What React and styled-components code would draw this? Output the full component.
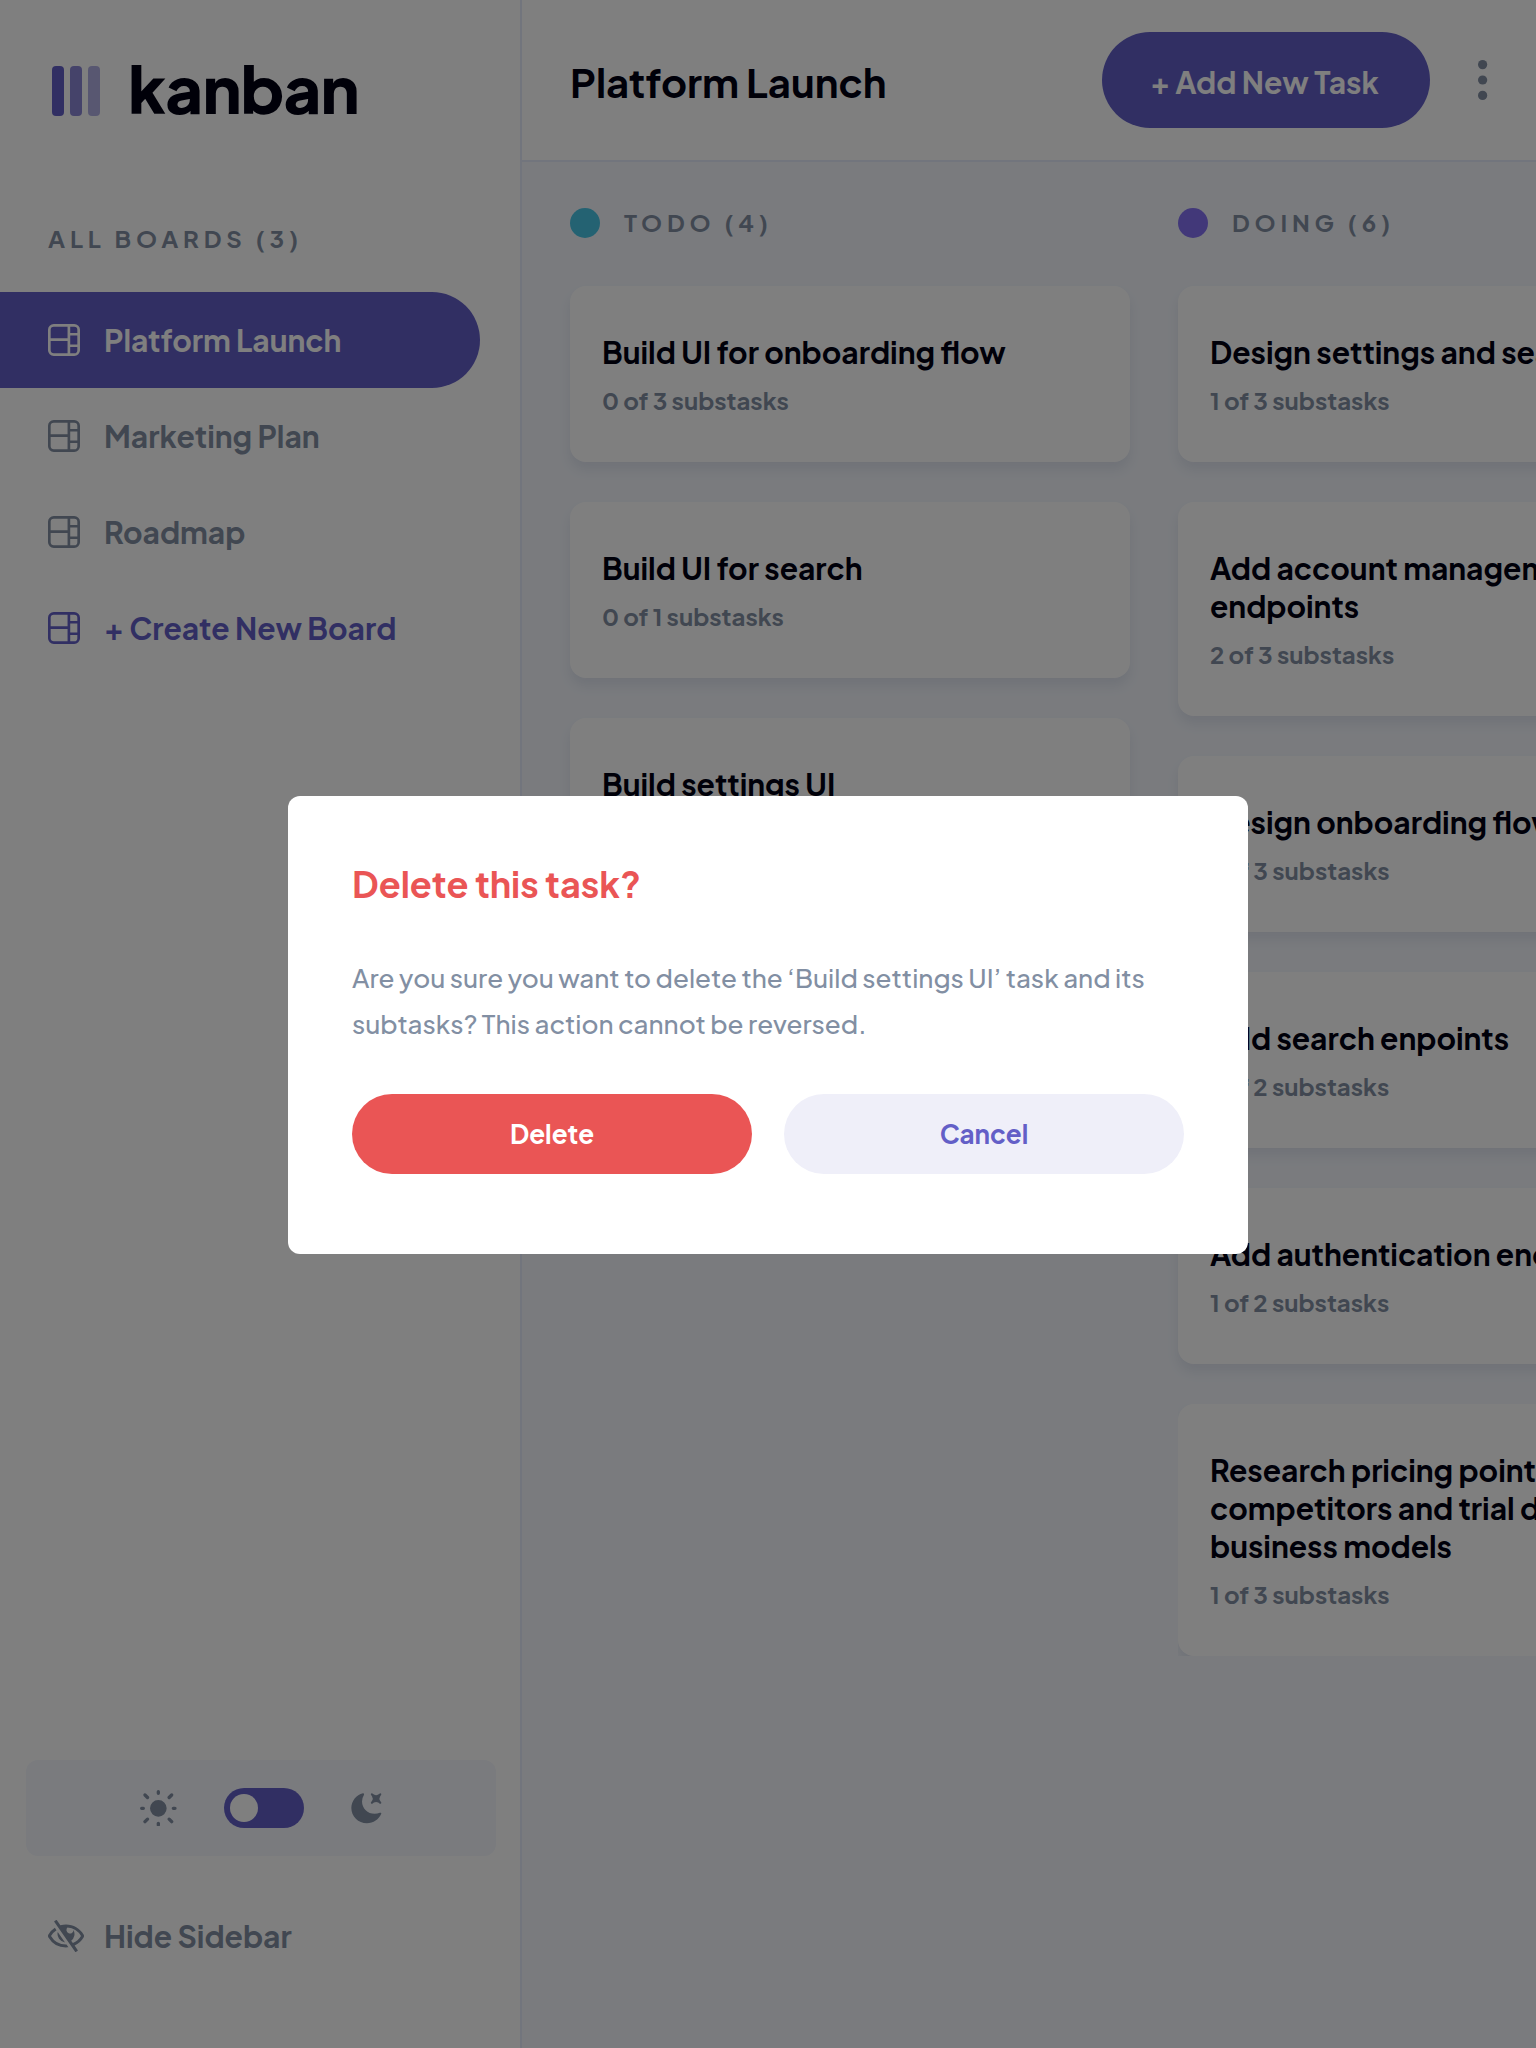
import React from "react";
import styled, { createGlobalStyle } from "styled-components";

const GlobalStyle = createGlobalStyle`
  *, *::before, *::after { box-sizing: border-box; }
  body {
    margin: 0;
    overflow: hidden;
    font-family: "Plus Jakarta Sans", Inter, sans-serif;
    font-weight: 700;
    background: #f4f7fd;
    color: #000112;
  }
  button { font: inherit; border: 0; cursor: pointer; }
  h1, h2, h3, p, ul { margin: 0; padding: 0; }
  ul { list-style: none; }
`;

const Page = styled.div`
  display: flex;
  width: 100vw;
  height: 100vh;
  overflow: hidden;
`;

/* Sidebar */
const Sidebar = styled.aside`
  display: flex;
  flex-direction: column;
  flex: 0 0 522px;
  padding: 66px 0 64px;
  background: #fff;
  border-right: 2px solid #e4ebfa;
`;

const Logo = styled.div`
  display: flex;
  align-items: center;
  height: 50px;
  padding-left: 52px;
  gap: 28px;
`;

const LogoBars = styled.div`
  display: flex;
  gap: 6px;
`;

const LogoBar = styled.i`
  width: 12px;
  height: 50px;
  border-radius: 4px;
  background: #635fc7;
  opacity: ${({ $opacity }) => $opacity};
`;

const Wordmark = styled.span`
  padding-bottom: 7px;
  font-size: 65px;
  font-weight: 800;
  line-height: 50px;
  letter-spacing: -0.8px;
`;

const NavHeading = styled.h2`
  margin: 107px 0 39px 48px;
  font-size: 24px;
  font-weight: 700;
  line-height: 30px;
  letter-spacing: 4.8px;
  color: #828fa3;
`;

const BoardLink = styled.li`
  display: flex;
  align-items: center;
  gap: 24px;
  width: 480px;
  height: 96px;
  padding-left: 48px;
  border-radius: 0 48px 48px 0;
  font-size: 30px;
  line-height: 38px;
  background: ${({ $active }) => ($active ? "#635fc7" : "transparent")};
  color: ${({ $active, $create }) => ($active ? "#fff" : $create ? "#635fc7" : "#828fa3")};

  svg { flex: none; fill: currentColor; }
`;

const SidebarFooter = styled.div`
  display: flex;
  flex-direction: column;
  gap: 32px;
  margin-top: auto;
`;

const ThemePanel = styled.div`
  display: flex;
  align-items: center;
  justify-content: center;
  gap: 46px;
  height: 96px;
  margin: 0 24px 0 26px;
  border-radius: 12px;
  background: #f4f7fd;
  color: #828fa3;

  svg { fill: currentColor; }
`;

const Switch = styled.button`
  display: flex;
  align-items: center;
  width: 80px;
  height: 40px;
  padding: 0 6px;
  border-radius: 20px;
  background: #635fc7;
`;

const Knob = styled.span`
  width: 28px;
  height: 28px;
  border-radius: 50%;
  background: #fff;
`;

const HideSidebar = styled.button`
  display: flex;
  align-items: center;
  gap: 20px;
  height: 96px;
  padding: 0 0 0 48px;
  background: none;
  color: #828fa3;
  font-size: 30px;
  line-height: 38px;

  svg { fill: currentColor; }
`;

/* Main area */
const Main = styled.main`
  display: flex;
  flex-direction: column;
  flex: 1;
  min-width: 0;
`;

const Header = styled.header`
  display: flex;
  align-items: center;
  height: 162px;
  padding: 0 48px;
  background: #fff;
  border-bottom: 2px solid #e4ebfa;

  svg { fill: #828fa3; }
`;

const BoardTitle = styled.h1`
  flex: 1;
  padding-top: 4px;
  font-size: 40px;
  font-weight: 700;
  line-height: 50px;
`;

const AddTask = styled.button`
  width: 328px;
  height: 96px;
  margin-right: 48px;
  padding: 4px 3px 0 0;
  border-radius: 48px;
  background: #635fc7;
  color: #fff;
  font-size: 30px;
  line-height: 38px;
`;

const Board = styled.div`
  display: flex;
  gap: 48px;
  flex: 1;
  min-height: 0;
  padding: 46px 48px 0;
`;

const Column = styled.section`
  flex: 0 0 560px;
`;

const ColumnHead = styled.div`
  display: flex;
  gap: 24px;
  margin-bottom: 48px;
  font-size: 24px;
  line-height: 28px;
  letter-spacing: 4.8px;
  color: #828fa3;
`;

const Dot = styled.i`
  width: 30px;
  height: 30px;
  border-radius: 50%;
  background: ${({ $color }) => $color};
`;

const CardList = styled.ul`
  display: flex;
  flex-direction: column;
  gap: 40px;
`;

const Card = styled.li`
  padding: 47px 32px;
  border-radius: 16px;
  background: #fff;
  box-shadow: 0 8px 12px rgba(54, 78, 126, 0.1);

  &:last-child { clip-path: inset(0); }
`;

const CardTitle = styled.h3`
  margin-bottom: 14px;
  font-size: 30px;
  font-weight: 700;
  line-height: 38px;
  white-space: pre;
`;

const CardMeta = styled.p`
  font-size: 24px;
  line-height: 30px;
  color: #828fa3;
`;

/* Dialog */
const Overlay = styled.div`
  position: fixed;
  inset: 0;
  display: flex;
  align-items: center;
  justify-content: center;
  padding-top: 2px;
  background: rgba(0, 0, 0, 0.5);
`;

const Dialog = styled.div`
  display: flex;
  flex-direction: column;
  width: 960px;
  height: 458px;
  padding: 65px 64px 0;
  border-radius: 12px;
  background: #fff;
`;

const DialogTitle = styled.h2`
  font-size: 36px;
  font-weight: 700;
  line-height: 46px;
  color: #ea5555;
`;

const DialogBody = styled.p`
  && { margin: 48px 0 47px; }
  font-size: 26px;
  font-weight: 500;
  line-height: 46px;
  color: #828fa3;
`;

const DialogActions = styled.div`
  display: grid;
  grid-template-columns: 1fr 1fr;
  gap: 32px;
`;

const DialogButton = styled.button`
  height: 80px;
  padding: 0;
  border-radius: 40px;
  font-size: 26px;
  line-height: 34px;
  background: ${({ $danger }) => ($danger ? "#ea5555" : "#efeff9")};
  color: ${({ $danger }) => ($danger ? "#fff" : "#635fc7")};
`;

const BoardIcon = () => (
  <svg width="32" height="32" viewBox="0 0 16 16">
    <path d="M0 2.889A2.889 2.889 0 0 1 2.889 0H13.11A2.889 2.889 0 0 1 16 2.889V13.11A2.888 2.888 0 0 1 13.111 16H2.89A2.889 2.889 0 0 1 0 13.111V2.89Zm1.333 5.555v4.667c0 .859.697 1.556 1.556 1.556h6.889V8.444H1.333Zm8.445-1.333V1.333h-6.89A1.556 1.556 0 0 0 1.334 2.89V7.11h8.445Zm4.889-1.333H11.11v4.444h3.556V5.778Zm0 5.778H11.11v3.11h2a1.556 1.556 0 0 0 1.556-1.555v-1.555Zm0-7.112V2.89a1.555 1.555 0 0 0-1.556-1.556h-2v3.111h3.556Z" />
  </svg>
);

const SunIcon = () => (
  <svg width="38" height="36.667" viewBox="0 0 19 18.333">
    <path d="M9.167 15.833a.833.833 0 0 1 .833.834v.833a.833.833 0 0 1-1.667 0v-.833a.833.833 0 0 1 .834-.834ZM3.75 13.75a.833.833 0 0 1 .59 1.422l-1.25 1.25a.833.833 0 0 1-1.18-1.178l1.25-1.25a.833.833 0 0 1 .59-.244Zm10.833 0c.221 0 .433.088.59.244l1.25 1.25a.833.833 0 0 1-1.179 1.178l-1.25-1.25a.833.833 0 0 1 .59-1.422ZM9.167 5a4.167 4.167 0 1 1 0 8.334 4.167 4.167 0 0 1 0-8.334Zm-7.5 3.333a.833.833 0 0 1 0 1.667H.833a.833.833 0 1 1 0-1.667h.834Zm15.833 0a.833.833 0 0 1 0 1.667h-.833a.833.833 0 0 1 0-1.667h.833Zm-1.667-6.666a.833.833 0 0 1 .59 1.422l-1.25 1.25a.833.833 0 1 1-1.179-1.178l1.25-1.25a.833.833 0 0 1 .59-.244Zm-13.333 0c.221 0 .433.088.59.244l1.25 1.25a.833.833 0 0 1-1.18 1.178L1.91 3.09a.833.833 0 0 1 .59-1.422ZM9.167 0A.833.833 0 0 1 10 .833v.834a.833.833 0 1 1-1.667 0V.833A.833.833 0 0 1 9.167 0Z" />
  </svg>
);

const MoonIcon = () => (
  <svg width="32" height="32" viewBox="0 0 16 16">
    <path d="M6.474.682c.434-.11.718.406.481.78A6.067 6.067 0 0 0 6.01 4.72c0 3.418 2.827 6.187 6.314 6.187.89.002 1.77-.182 2.584-.54.408-.18.894.165.724.57-1.16 2.775-3.944 4.73-7.194 4.73-4.292 0-7.771-3.41-7.771-7.615 0-3.541 2.466-6.518 5.807-7.37Zm8.433.07c.442-.294.969.232.674.674l-.525.787a1.943 1.943 0 0 0 0 2.157l.525.788c.295.441-.232.968-.674.673l-.787-.525a1.943 1.943 0 0 0-2.157 0l-.786.525c-.442.295-.97-.232-.675-.673l.525-.788a1.943 1.943 0 0 0 0-2.157l-.525-.787c-.295-.442.232-.968.674-.673l.787.525a1.943 1.943 0 0 0 2.157 0Z" />
  </svg>
);

const HideIcon = () => (
  <svg width="36" height="32" viewBox="0 0 18 16">
    <path d="M8.522 11.223a4.252 4.252 0 0 1-3.654-5.22l3.654 5.22ZM9 12.25A8.685 8.685 0 0 1 1.5 8a8.612 8.612 0 0 1 2.76-2.864l-.86-1.23A10.112 10.112 0 0 0 .208 7.238a1.5 1.5 0 0 0 0 1.524A10.187 10.187 0 0 0 9 13.75c.414 0 .828-.025 1.239-.074l-1-1.43A8.88 8.88 0 0 1 9 12.25Zm8.792-3.488a10.14 10.14 0 0 1-4.486 4.046l1.504 2.148a.375.375 0 0 1-.092.523l-.648.453a.375.375 0 0 1-.523-.092L3.19 1.044A.375.375 0 0 1 3.282.52L3.93.068a.375.375 0 0 1 .523.092l1.735 2.479A10.308 10.308 0 0 1 9 2.25c3.746 0 7.031 2 8.792 4.988a1.5 1.5 0 0 1 0 1.524ZM16.5 8a8.674 8.674 0 0 0-6.755-4.219A1.75 1.75 0 1 0 12.75 5v-.001a4.25 4.25 0 0 1-1.154 5.366l.834 1.192A8.641 8.641 0 0 0 16.5 8Z" />
  </svg>
);

const MoreIcon = () => (
  <svg width="10" height="40" viewBox="0 0 5 20">
    <circle cx="2.308" cy="2.308" r="2.308" />
    <circle cx="2.308" cy="10" r="2.308" />
    <circle cx="2.308" cy="17.692" r="2.308" />
  </svg>
);

const boards = [
  { name: "Platform Launch", active: true },
  { name: "Marketing Plan" },
  { name: "Roadmap" },
  { name: "+ Create New Board", create: true },
];

const columns = [
  {
    name: "TODO (4)",
    color: "#49c4e5",
    tasks: [
      { title: "Build UI for onboarding flow", meta: "0 of 3 substasks" },
      { title: "Build UI for search", meta: "0 of 1 substasks" },
      { title: "Build settings UI", meta: "0 of 2 substasks" },
      { title: "QA and test all major user\njourneys", meta: "0 of 2 substasks" },
    ],
  },
  {
    name: "DOING (6)",
    color: "#8471f2",
    tasks: [
      { title: "Design settings and search pages", meta: "1 of 3 substasks" },
      { title: "Add account management\nendpoints", meta: "2 of 3 substasks" },
      { title: "Design onboarding flow", meta: "1 of 3 substasks" },
      { title: "Add search enpoints", meta: "1 of 2 substasks" },
      { title: "Add authentication endpoints", meta: "1 of 2 substasks" },
      {
        title: "Research pricing points of various\ncompetitors and trial different\nbusiness models",
        meta: "1 of 3 substasks",
      },
    ],
  },
];

export default function App() {
  return (
    <>
      <GlobalStyle />
      <Page>
        <Sidebar>
          <Logo>
            <LogoBars>
              <LogoBar $opacity={1} />
              <LogoBar $opacity={0.75} />
              <LogoBar $opacity={0.5} />
            </LogoBars>
            <Wordmark>kanban</Wordmark>
          </Logo>
          <NavHeading>ALL BOARDS (3)</NavHeading>
          <ul>
            {boards.map((b) => (
              <BoardLink key={b.name} $active={b.active} $create={b.create}>
                <BoardIcon />
                <span>{b.name}</span>
              </BoardLink>
            ))}
          </ul>
          <SidebarFooter>
            <ThemePanel>
              <SunIcon />
              <Switch aria-label="Toggle theme">
                <Knob />
              </Switch>
              <MoonIcon />
            </ThemePanel>
            <HideSidebar>
              <HideIcon />
              <span>Hide Sidebar</span>
            </HideSidebar>
          </SidebarFooter>
        </Sidebar>
        <Main>
          <Header>
            <BoardTitle>Platform Launch</BoardTitle>
            <AddTask>+ Add New Task</AddTask>
            <MoreIcon />
          </Header>
          <Board>
            {columns.map((col) => (
              <Column key={col.name}>
                <ColumnHead>
                  <Dot $color={col.color} />
                  <span>{col.name}</span>
                </ColumnHead>
                <CardList>
                  {col.tasks.map((t) => (
                    <Card key={t.title}>
                      <CardTitle>{t.title}</CardTitle>
                      <CardMeta>{t.meta}</CardMeta>
                    </Card>
                  ))}
                </CardList>
              </Column>
            ))}
          </Board>
        </Main>
      </Page>
      <Overlay>
        <Dialog role="dialog">
          <DialogTitle>Delete this task?</DialogTitle>
          <DialogBody>
            Are you sure you want to delete the ‘Build settings UI’ task and its
            <br />
            subtasks? This action cannot be reversed.
          </DialogBody>
          <DialogActions>
            <DialogButton $danger>Delete</DialogButton>
            <DialogButton>Cancel</DialogButton>
          </DialogActions>
        </Dialog>
      </Overlay>
    </>
  );
}
